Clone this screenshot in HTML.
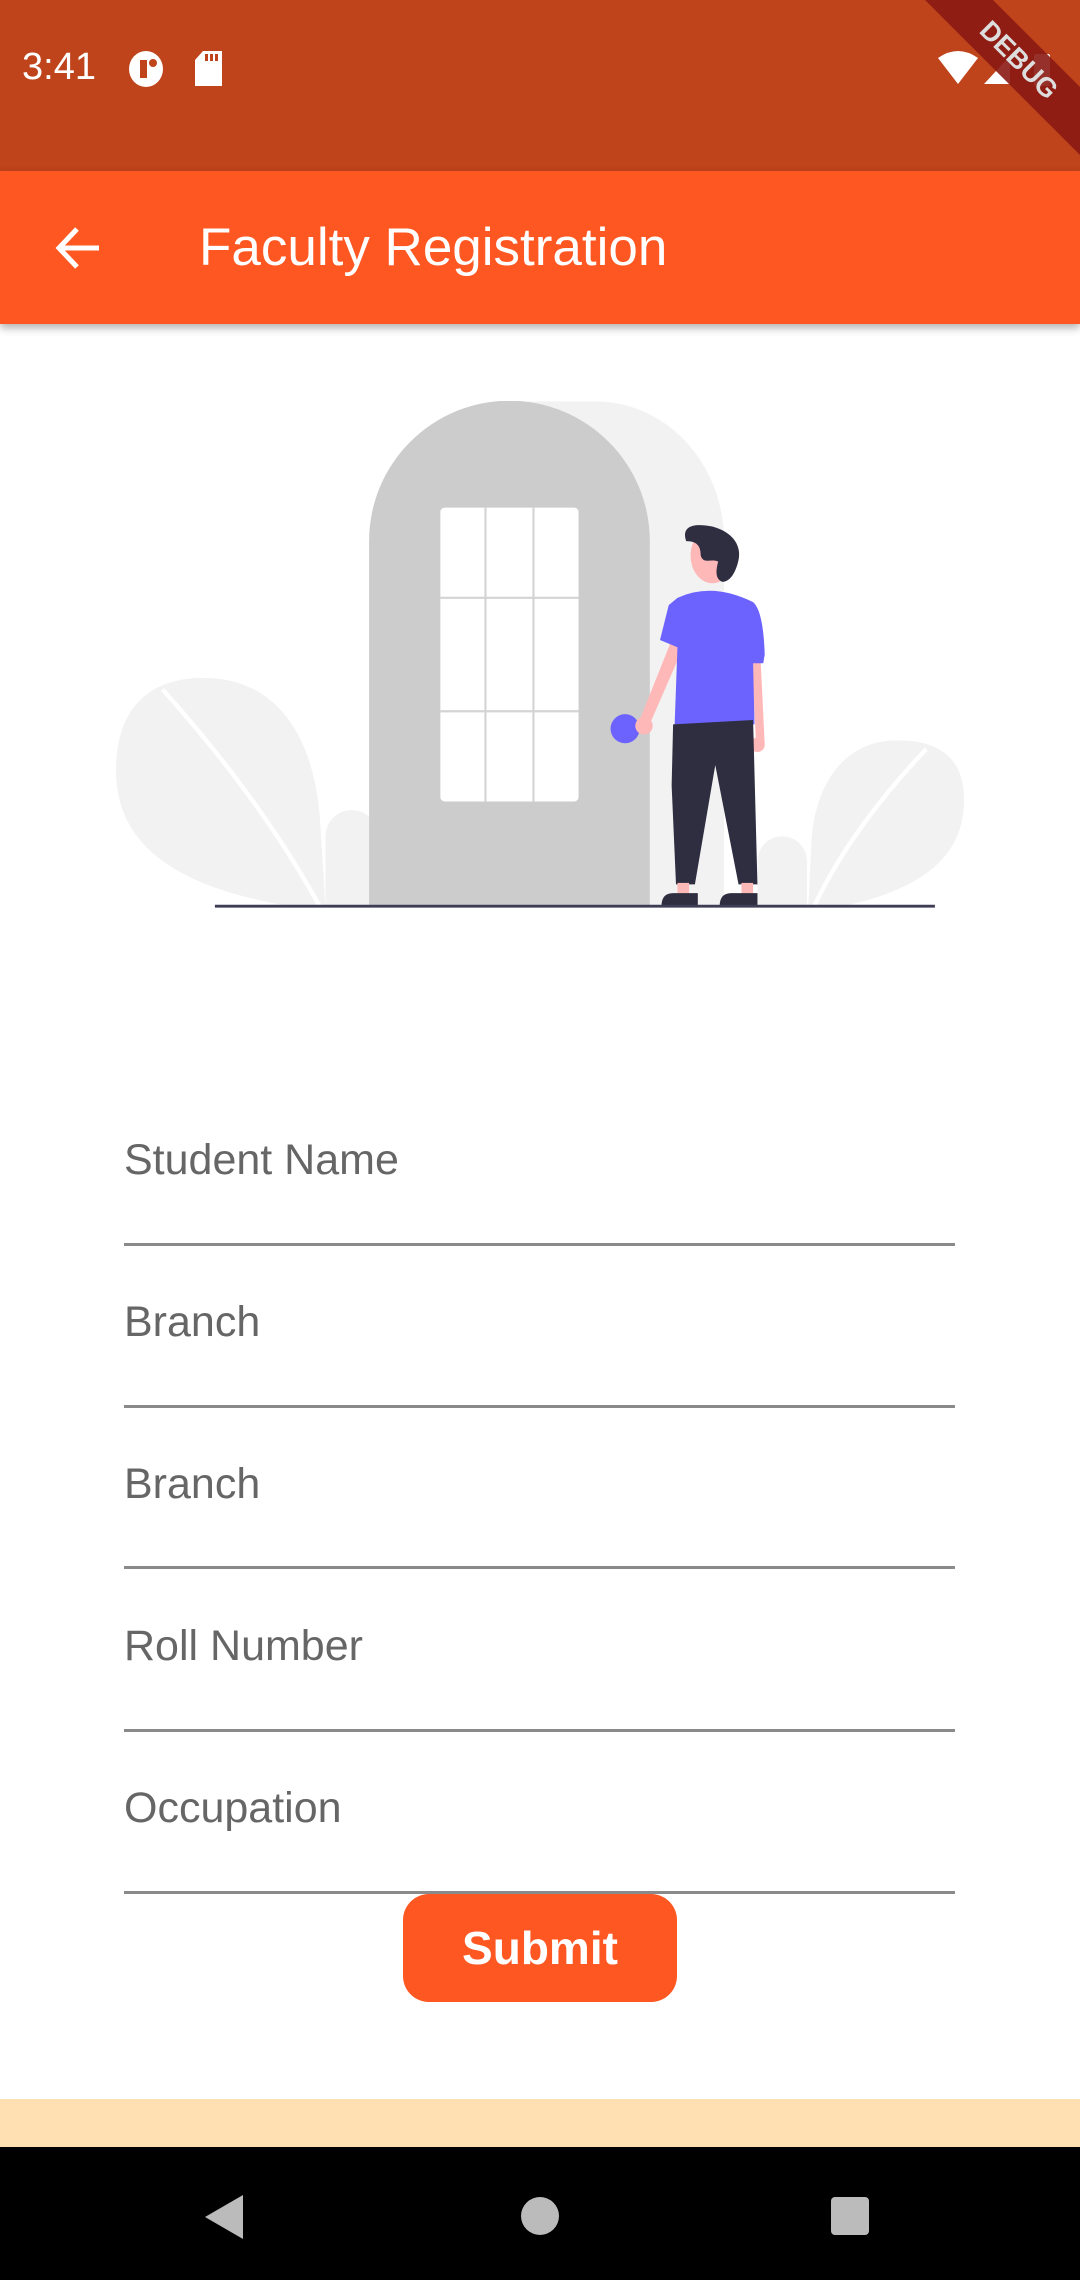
<!DOCTYPE html>
<html><head><meta charset="utf-8"><style>
*{margin:0;padding:0;box-sizing:border-box}
body{width:1080px;height:2280px;position:relative;background:#fff;font-family:"Liberation Sans",sans-serif;overflow:hidden}
.status{position:absolute;left:0;top:0;width:1080px;height:171px;background:#BF431B;overflow:hidden}
.appbar{position:absolute;left:0;top:171px;width:1080px;height:153px;background:#FF5722;box-shadow:0 4px 8px rgba(0,0,0,0.3)}
.title{position:absolute;left:199px;top:0;line-height:153px;color:#fff;font-size:53px}
.label{position:absolute;left:124px;font-size:43px;color:#666}
.line{position:absolute;left:124px;width:831px;height:3px;background:#8a8a8a}
.btn{position:absolute;left:403px;top:1894px;width:274px;height:108px;background:#FF5722;border-radius:26px;color:#fff;font-weight:bold;font-size:46px;text-align:center;line-height:108px}
.peach{position:absolute;left:0;top:2099px;width:1080px;height:48px;background:#FFE0B2}
.nav{position:absolute;left:0;top:2147px;width:1080px;height:133px;background:#000}
</style></head><body>
<div class="status">
<div style="position:absolute;left:22px;top:46px;color:#fff;font-size:38px;">3:41</div>
<svg style="position:absolute;left:128px;top:50px" width="40" height="38" viewBox="0 0 40 38"><ellipse cx="18" cy="19" rx="17" ry="18" fill="#fff"/><rect x="12" y="10" width="7" height="18" fill="#BF431B"/><circle cx="25" cy="13" r="4" fill="#BF431B"/></svg>
<svg style="position:absolute;left:195px;top:51px" width="28" height="35" viewBox="0 0 28 35"><path d="M8 0H27V35H0V9Z" fill="#fff"/><rect x="10" y="3" width="3" height="7" fill="#BF431B"/><rect x="15" y="3" width="3" height="7" fill="#BF431B"/><rect x="20" y="3" width="3" height="7" fill="#BF431B"/></svg>
<svg style="position:absolute;left:938px;top:50px" width="120" height="40" viewBox="0 0 120 40"><path d="M0 8Q20 -6 40 8L20 34Z" fill="#fff"/><path d="M46 34L72 6V34Z" fill="#fff"/><rect x="96" y="4" width="16" height="32" rx="2" fill="#fff"/></svg>
<div style="position:absolute;left:889px;top:36px;width:260px;height:48px;background:rgba(139,26,20,0.9);transform:rotate(45deg);color:#ddd;font-weight:bold;font-size:27px;text-align:center;line-height:48px;">DEBUG</div>
</div>
<div class="appbar">
<svg style="position:absolute;left:55px;top:55px" width="46" height="44" viewBox="0 0 46 44"><path d="M44 22H5M22 3L4 22L22 41" stroke="#fff" stroke-width="5" fill="none"/></svg>
<div class="title">Faculty Registration</div>
</div>
<svg style="position:absolute;left:116px;top:401px" width="848" height="510" viewBox="80 276 583 350">
<path d="M350 623V276H410A88 96 0 0 1 498 372V623Z" fill="#F2F2F2"/>
<path d="M80 530C80 480 110 466 140 466C190 466 215 505 220 560L224 623H200C120 610 80 580 80 530Z" fill="#F2F2F2"/>
<path d="M112 474Q180 550 220 623" stroke="#fff" stroke-width="3" fill="none"/>
<circle cx="242" cy="575" r="18" fill="#F2F2F2"/><rect x="224" y="575" width="36" height="48" fill="#F2F2F2"/>
<path d="M663 550C663 520 645 509 617 509C580 509 560 540 558 580L556 623H580C640 610 663 585 663 550Z" fill="#F2F2F2"/>
<path d="M637 515Q585 570 560 623" stroke="#fff" stroke-width="3" fill="none"/>
<circle cx="538" cy="592" r="17" fill="#F2F2F2"/><rect x="521" y="592" width="34" height="31" fill="#F2F2F2"/>
<path d="M254 623V372A96.5 96.5 0 0 1 447 372V623Z" fill="#CCCCCC"/>
<rect x="303" y="349" width="95" height="202" rx="3" fill="#fff"/>
<path d="M334 349V551M367 349V551M303 411H398M303 489H398" stroke="#d4d4d4" stroke-width="1.5"/>
<circle cx="430" cy="501" r="10" fill="#6C63FF"/>
<path d="M462 440L440 495L446 500L470 445Z" fill="#FFB8B8"/><circle cx="443" cy="499" r="6" fill="#FFB8B8"/>
<path d="M517 450L520 510L526 512L523 450Z" fill="#FFB8B8"/><circle cx="521" cy="512" r="5" fill="#FFB8B8"/>
<ellipse cx="490" cy="382" rx="15" ry="19" fill="#FFB8B8"/>
<path d="M472 372C468 360 480 360 490 362C505 366 510 376 508 385C506 394 502 400 497 400C491 398 493 390 494 386C488 384 484 388 482 382C482 376 480 372 472 372Z" fill="#2F2E41"/>
<path d="M466 411Q490 400 518 414Q525 420 526 450L525 456L518 456L519 498L464 500L466 445L454 440L460 416Z" fill="#6C63FF"/>
<path d="M463 498L518 495L521 608L508 608L492 526L478 608L465 608L462 540Z" fill="#2F2E41"/>
<rect x="466" y="607" width="8" height="10" fill="#FFB8B8"/><rect x="510" y="607" width="8" height="10" fill="#FFB8B8"/>
<path d="M455 623Q455 614 463 614H480V623Z" fill="#2F2E41"/><path d="M495 623Q495 614 503 614H521V623Z" fill="#2F2E41"/>
<path d="M148 623H643" stroke="#3F3D56" stroke-width="2"/>
</svg>
<div class="label" style="top:1136px">Student Name</div><div class="line" style="top:1243px"></div>
<div class="label" style="top:1298px">Branch</div><div class="line" style="top:1405px"></div>
<div class="label" style="top:1460px">Branch</div><div class="line" style="top:1566px"></div>
<div class="label" style="top:1622px">Roll Number</div><div class="line" style="top:1729px"></div>
<div class="label" style="top:1784px">Occupation</div><div class="line" style="top:1891px"></div>
<div class="btn">Submit</div>
<div class="peach"></div>
<div class="nav">
<svg style="position:absolute;left:205px;top:48px" width="40" height="44" viewBox="0 0 40 44"><path d="M38 0V44L0 22Z" fill="#bbb"/></svg>
<div style="position:absolute;left:521px;top:50px;width:38px;height:38px;border-radius:50%;background:#bbb"></div>
<div style="position:absolute;left:831px;top:50px;width:38px;height:38px;border-radius:4px;background:#bbb"></div>
</div>
</body></html>
